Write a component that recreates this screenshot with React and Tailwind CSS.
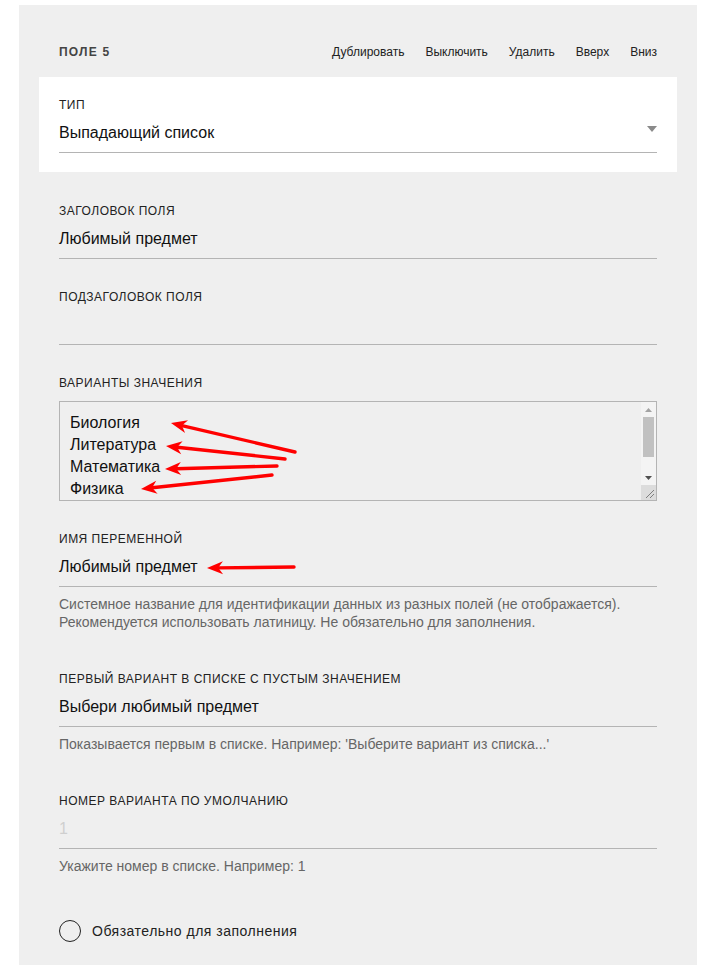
import React from 'react';

const font = { fontFamily: '"Liberation Sans", Arial, sans-serif' };

const actions = ['Дублировать', 'Выключить', 'Удалить', 'Вверх', 'Вниз'];

const options = ['Биология', 'Литература', 'Математика', 'Физика'];

// annotation arrows drawn over the screenshot: [fromX, fromY, toX, toY]
const arrows = [
  [295, 452, 171, 423],
  [285, 459, 166, 446],
  [277, 466, 165, 469],
  [272, 475, 141, 489],
  [294, 567, 207, 568],
];

const Arrow = ({ x1, y1, x2, y2 }) => {
  const a = Math.atan2(y2 - y1, x2 - x1);
  const len = 16;
  const w = 6.5;
  const bx = x2 - len * Math.cos(a);
  const by = y2 - len * Math.sin(a);
  const nx = -Math.sin(a) * w;
  const ny = Math.cos(a) * w;
  const mx = x2 - len * 0.7 * Math.cos(a);
  const my = y2 - len * 0.7 * Math.sin(a);
  return (
    <g>
      <line x1={x1} y1={y1} x2={mx} y2={my} stroke="#ff0000" strokeWidth="3.4" strokeLinecap="round" />
      <polygon points={`${x2},${y2} ${bx + nx},${by + ny} ${mx},${my} ${bx - nx},${by - ny}`} fill="#ff0000" />
    </g>
  );
};

const Label = ({ children }) => (
  <div className="text-xs leading-4 uppercase tracking-[0.5px] text-[#222] mb-[10px]">{children}</div>
);

const Field = ({ label, value, placeholder, hint }) => (
  <div>
    <Label>{label}</Label>
    <div className="leading-[18px] h-[30px] pt-px pb-[10px] border-b border-[#b4b4b4] text-base">
      {value ? <span className="text-[#111]">{value}</span> : <span className="text-[#cfcfcf]">{placeholder}</span>}
    </div>
    {hint && (
      <div className="mt-2 text-sm leading-[18px] text-[#666]">
        {hint.map((line) => (
          <div key={line}>{line}</div>
        ))}
      </div>
    )}
  </div>
);

const Scrollbar = () => (
  <div className="w-[15px] flex flex-col bg-[#f4f4f4]">
    <div className="h-[15px] flex items-center justify-center">
      <svg width="7" height="4" viewBox="0 0 7 4">
        <polygon points="0,4 7,4 3.5,0" fill="#a3a3a3" />
      </svg>
    </div>
    <div className="flex-1 px-[2px]">
      <div className="h-10 bg-[#c1c1c1]" />
    </div>
    <div className="h-[15px] flex items-center justify-center">
      <svg width="7" height="4" viewBox="0 0 7 4">
        <polygon points="0,0 7,0 3.5,4" fill="#505050" />
      </svg>
    </div>
    <div className="h-[15px] bg-[#dcdcdc] flex items-end justify-end">
      <svg width="15" height="15" viewBox="0 0 15 15">
        <line x1="13" y1="5" x2="5" y2="13" stroke="#666" strokeWidth="0.8" />
        <line x1="13" y1="9" x2="9" y2="13" stroke="#666" strokeWidth="0.8" />
      </svg>
    </div>
  </div>
);

export default function App() {
  return (
    <div className="relative min-h-[965px] bg-white overflow-hidden" style={font}>
      <div className="ml-[19px] mr-[18px] mt-[5px] bg-[#efefef] px-10 pt-[37px] pb-10">
        <div className="flex items-center justify-between h-5 mb-[15px]">
          <div className="text-xs font-bold tracking-[1.2px] text-[#444]">ПОЛЕ 5</div>
          <div className="flex gap-[21px] text-xs text-[#222]">
            {actions.map((a) => (
              <span key={a}>{a}</span>
            ))}
          </div>
        </div>

        <div className="-mx-5 px-5 bg-white pt-5 pb-[19px]">
          <Label>Тип</Label>
          <div className="flex justify-between leading-[18px] h-[30px] pt-px pb-[10px] border-b border-[#b4b4b4] text-base text-[#111]">
            <span>Выпадающий список</span>
            <svg width="10" height="6" viewBox="0 0 10 6" className="mt-[2px]">
              <polygon points="0,0 10,0 5,6" fill="#8a8a8a" />
            </svg>
          </div>
        </div>

        <div className="mt-[31px] flex flex-col gap-[30px]">
          <Field label="Заголовок поля" value="Любимый предмет" />
          <Field label="Подзаголовок поля" value="" placeholder="" />
          <div>
            <Label>Варианты значения</Label>
            <div className="flex h-[100px] border border-[#b4b4b4] bg-[#efefef]">
              <div className="flex-1 overflow-hidden pt-[10px] px-[10px] text-base leading-[22px] text-[#111]">
                {options.map((o) => (
                  <div key={o}>{o}</div>
                ))}
              </div>
              <Scrollbar />
            </div>
          </div>
          <Field
            label="Имя переменной"
            value="Любимый предмет"
            hint={[
              'Системное название для идентификации данных из разных полей (не отображается).',
              'Рекомендуется использовать латиницу. Не обязательно для заполнения.',
            ]}
          />
        </div>

        <div className="mt-10">
          <Field
            label="Первый вариант в списке с пустым значением"
            value="Выбери любимый предмет"
            hint={["Показывается первым в списке. Например: 'Выберите вариант из списка...'"]}
          />
        </div>

        <div className="mt-10">
          <Field label="Номер варианта по умолчанию" value="" placeholder="1" hint={['Укажите номер в списке. Например: 1']} />
        </div>

        <label className="mt-[45px] flex items-center gap-[11px]">
          <span className="w-[22px] h-[22px] rounded-full border-[1.5px] border-[#222]" />
          <span className="text-sm tracking-[0.5px] text-[#222]">Обязательно для заполнения</span>
        </label>
      </div>

      <svg className="absolute inset-0 pointer-events-none" width="715" height="965">
        {arrows.map(([x1, y1, x2, y2], i) => (
          <Arrow key={i} x1={x1} y1={y1} x2={x2} y2={y2} />
        ))}
      </svg>
    </div>
  );
}
